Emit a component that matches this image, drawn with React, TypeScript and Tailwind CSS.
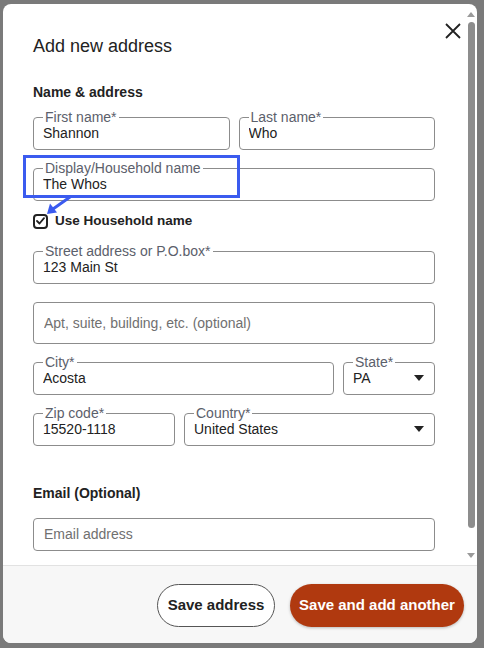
import React from 'react';

const FONT = { fontFamily: '"Liberation Sans", Arial, sans-serif' };

interface FieldProps {
  label?: string;
  value?: string;
  placeholder?: string;
  select?: boolean;
  className?: string;
}

function Caret() {
  return (
    <svg width="10" height="6" viewBox="0 0 10 6" className="shrink-0">
      <path d="M0 0 L10 0 L5 6 Z" fill="#222" />
    </svg>
  );
}

// Outlined text field with the label sitting in the top border notch
function Field({ label, value = '', placeholder, select, className = '' }: FieldProps) {
  return (
    <fieldset className={`border border-[#8c8c8c] rounded-[4px] pl-[9px] pr-[10px] pb-[7px] ${className}`}>
      <legend className="ml-0 px-[2px] text-[14px] leading-[14px] text-[#5b606b]">{label}</legend>
      <div className="flex items-center justify-between h-[18px]">
        <input
          readOnly
          value={value}
          placeholder={placeholder}
          className="w-full min-w-0 bg-transparent outline-none text-[14px] leading-[18px] text-[#222] placeholder:text-[#707070]"
        />
        {select && <Caret />}
      </div>
    </fieldset>
  );
}

function PlainInput({ placeholder, height }: { placeholder: string; height: string }) {
  return (
    <div className={`flex items-center border border-[#8c8c8c] rounded-[4px] px-[10px] ${height}`}>
      <input
        readOnly
        placeholder={placeholder}
        className="w-full bg-transparent outline-none text-[14px] text-[#222] placeholder:text-[#707070]"
      />
    </div>
  );
}

function Scrollbar() {
  return (
    <div className="w-[12px] flex flex-col items-center pt-[8px]">
      <svg width="8" height="5" viewBox="0 0 8 5">
        <path d="M0 5 L8 5 L4 0 Z" fill="#9a9a9a" />
      </svg>
      <div className="mt-[5px] w-[7px] h-[506px] rounded-full bg-[#8d8d8d]" />
      <svg width="8" height="5" viewBox="0 0 8 5" className="mt-[25px]">
        <path d="M0 0 L8 0 L4 5 Z" fill="#9a9a9a" />
      </svg>
    </div>
  );
}

export default function App() {
  return (
    <div className="w-[484px] h-[648px] bg-[#7a7a7a] pl-[3px] pt-[4px]" style={FONT}>
      <div className="relative w-[474px] h-[639px] bg-white rounded-[8px] overflow-hidden flex flex-col">
        <div className="flex flex-1 min-h-0">
          <div className="flex-1 pl-[30px] pr-[30px] pt-[30px] flex flex-col">
            <h2 className="text-[18px] leading-[24px] text-[#222]">Add new address</h2>

            <h3 className="mt-[24px] text-[14px] leading-[20px] font-bold text-[#222]">Name &amp; address</h3>

            <div className="mt-[8px] flex gap-[9px]">
              <Field label="First name*" value="Shannon" className="flex-1" />
              <Field label="Last name*" value="Who" className="flex-1" />
            </div>

            <Field label="Display/Household name" value="The Whos" className="mt-[11px]" />

            <label className="mt-[12px] flex items-center gap-[7px] h-[16px]">
              <span className="w-[15px] h-[15px] rounded-[4px] border-2 border-[#222] flex items-center justify-center">
                <svg width="9" height="8" viewBox="0 0 9 8">
                  <path d="M1 4 L3.5 6.5 L8 1.2" stroke="#222" strokeWidth="1.8" fill="none" strokeLinecap="round" strokeLinejoin="round" />
                </svg>
              </span>
              <span className="text-[13.5px] font-bold text-[#222]">Use Household name</span>
            </label>

            <Field label="Street address or P.O.box*" value="123 Main St" className="mt-[15px]" />

            <div className="mt-[18px]">
              <PlainInput placeholder="Apt, suite, building, etc. (optional)" height="h-[42px]" />
            </div>

            <div className="mt-[11px] flex gap-[9px]">
              <Field label="City*" value="Acosta" className="flex-1" />
              <Field label="State*" value="PA" select className="w-[92px]" />
            </div>

            <div className="mt-[11px] flex gap-[9px]">
              <Field label="Zip code*" value="15520-1118" className="w-[142px]" />
              <Field label="Country*" value="United States" select className="flex-1" />
            </div>

            <h3 className="mt-[37px] text-[14px] leading-[20px] font-bold text-[#222]">Email (Optional)</h3>

            <div className="mt-[15px]">
              <PlainInput placeholder="Email address" height="h-[33px]" />
            </div>
          </div>
          <Scrollbar />
        </div>

        <div className="h-[78px] shrink-0 border-t border-[#e2e2e2] bg-[#f7f7f7] flex items-center justify-end gap-[15px] pr-[13px] pt-[2px]">
          <button className="h-[43px] w-[118px] rounded-full border border-[#555] bg-white text-[15px] font-bold text-[#222]">
            Save address
          </button>
          <button className="h-[43px] w-[174px] rounded-full bg-[#b0390f] text-[15px] font-bold text-white shadow-[0_1px_3px_rgba(0,0,0,0.25)]">
            Save and add another
          </button>
        </div>

        {/* close button */}
        <button className="absolute top-[19px] right-[16px] w-[16px] h-[16px]">
          <svg width="16" height="16" viewBox="0 0 16 16">
            <path d="M1 1 L15 15 M15 1 L1 15" stroke="#222" strokeWidth="1.8" />
          </svg>
        </button>

        {/* highlight callout */}
        <div className="absolute left-[20px] top-[151px] w-[217px] h-[43px] border-[3px] border-[#3b5bef]" />
        <svg className="absolute left-[36px] top-[190px]" width="36" height="26" viewBox="0 0 36 26">
          <path d="M31 3 L14 15" stroke="#3b5bef" strokeWidth="3" strokeLinecap="round" />
          <path d="M8 20 L11 9.5 L18 18.5 Z" fill="#3b5bef" />
        </svg>
      </div>
    </div>
  );
}
